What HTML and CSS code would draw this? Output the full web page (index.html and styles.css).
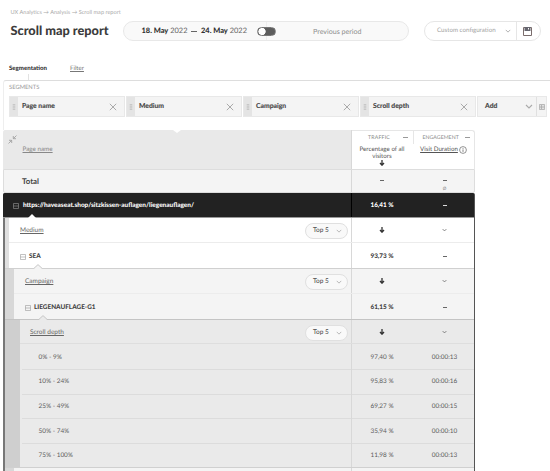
FILE: index.html
```html
<!DOCTYPE html>
<html lang="en">
<head>
<meta charset="utf-8">
<title>Scroll map report</title>
<link rel="stylesheet" href="styles.css">
</head>
<body>
<svg class="defs" width="0" height="0">
  <symbol id="chev" viewBox="0 0 8 5"><path d="M1 1l3 3 3-3" fill="none" stroke="currentColor" stroke-width="1.1"/></symbol>
  <symbol id="close" viewBox="0 0 8 8"><path d="M.8.8l6.4 6.4M7.2.8L.8 7.2" fill="none" stroke="currentColor"/></symbol>
  <symbol id="down" viewBox="0 0 6 6"><path d="M3 0v5M1 3l2 2.2L5 3" fill="none" stroke="currentColor" stroke-width="1.3"/></symbol>
  <symbol id="box" viewBox="0 0 6 6"><path d="M.5.5h5v5h-5zM.5 3h5" fill="none" stroke="currentColor" stroke-width=".6"/></symbol>
  <symbol id="grip" viewBox="0 0 4 7"><path d="M.5 1h3M.5 3.5h3M.5 6h3" fill="none" stroke="currentColor" stroke-width=".9"/></symbol>
  <symbol id="notch" viewBox="0 0 8 5"><path d="M0 4.5L4 .7l4 3.8V5H0z" fill="currentColor"/><path d="M0 4.3L4 .6l4 3.7" fill="none" stroke="#c6c6c6"/></symbol>
</svg>
<header>
  <div class="crumbs">UX Analytics → Analysis → Scroll map report</div>
  <div class="bar">
    <h1>Scroll map report</h1>
    <div class="period">
      <span class="date"><b>18. May</b> 2022</span><span class="dash"></span><span class="date"><b>24. May</b> 2022</span>
      <span class="split"><span class="toggle"></span></span>
      <span class="prev">Previous period</span>
    </div>
    <div class="config">
      <span class="cfg">Custom configuration</span>
      <svg class="cv" width="6" height="4"><use href="#chev"/></svg>
      <span class="save"><svg width="9" height="9" viewBox="0 0 9 9"><path d="M.5.5h8v8h-8z" fill="#fff" stroke="#7a6c6c"/><path d="M1.5 0h6v4h-6z" fill="#66666f"/><path d="M5 1h1v1.5H5z" fill="#fff"/></svg></span>
    </div>
  </div>
</header>
<nav><b>Segmentation</b><u>Filter</u></nav>
<section class="segments">
  <div class="label">SEGMENTS</div>
  <div class="chips">
    <div class="chip"><i><svg width="4" height="6"><use href="#grip"/></svg></i><span>Page name</span><svg class="x" width="8" height="8"><use href="#close"/></svg></div>
    <div class="chip"><i><svg width="4" height="6"><use href="#grip"/></svg></i><span>Medium</span><svg class="x" width="8" height="8"><use href="#close"/></svg></div>
    <div class="chip"><i><svg width="4" height="6"><use href="#grip"/></svg></i><span>Campaign</span><svg class="x" width="8" height="8"><use href="#close"/></svg></div>
    <div class="chip"><i><svg width="4" height="6"><use href="#grip"/></svg></i><span>Scroll depth</span><svg class="x" width="8" height="8"><use href="#close"/></svg></div>
    <div class="chip add"><span>Add</span><svg class="x" width="8" height="5"><use href="#chev"/></svg><em><svg width="6" height="6" viewBox="0 0 6 6"><path d="M.4.5h5.2v5H.4zM.5 2.2h5M.5 3.8h5M2.5 1v4" fill="none" stroke="#aaa" stroke-width=".8"/></svg></em></div>
  </div>
</section>
<main>
  <div class="row head">
    <div class="c1"><svg class="collapse" width="9" height="9" viewBox="0 0 9 9"><path d="M8.5.5L5.5 3.5M5.3 1v2.7H8M.5 8.5l3-3M1 5.3h2.7V8" fill="none" stroke="#999" stroke-width=".8"/></svg><u>Page name</u></div>
    <div class="c2"><div class="cap"><span>TRAFFIC</span><i></i></div><p>Percentage of all<br>visitors</p><svg width="6" height="6"><use href="#down"/></svg></div>
    <div class="c3"><div class="cap"><span>ENGAGEMENT</span><i></i></div><p><u>Visit Duration</u><svg width="8" height="8" viewBox="0 0 8 8"><circle cx="4" cy="4" r="3.4" fill="none" stroke="#666" stroke-width=".7"/><path d="M4 3.4v2.5M4 2v.8" stroke="#666" stroke-width=".8"/></svg></p></div>
  </div>
  <div class="row total"><div class="c1">Total</div><div class="c2"><s></s></div><div class="c3"><s></s><small>Ø</small></div></div>
  <div class="tree">
    <div class="row page"><div class="c1"><svg width="6" height="6"><use href="#box"/></svg><b>https://haveaseat.shop/sitzkissen-auflagen/liegenauflagen/</b></div><div class="c2"><b>16,41 %</b></div><div class="c3"><s></s></div></div>
    <div class="level l1">
      <div class="row dim"><div class="c1"><u>Medium</u><span class="top">Top 5<svg width="6" height="4"><use href="#chev"/></svg></span></div><div class="c2"><svg width="6" height="6"><use href="#down"/></svg></div><div class="c3"><svg width="5" height="4"><use href="#chev"/></svg></div></div>
      <div class="row item"><div class="c1"><svg width="6" height="6"><use href="#box"/></svg><b>SEA</b><svg class="notch" width="8" height="5"><use href="#notch"/></svg></div><div class="c2"><b>93,73 %</b></div><div class="c3"><s></s></div></div>
    </div>
    <div class="level l2">
      <div class="row dim"><div class="c1"><u>Campaign</u><span class="top">Top 5<svg width="6" height="4"><use href="#chev"/></svg></span></div><div class="c2"><svg width="6" height="6"><use href="#down"/></svg></div><div class="c3"><svg width="5" height="4"><use href="#chev"/></svg></div></div>
      <div class="row item"><div class="c1"><svg width="6" height="6"><use href="#box"/></svg><b>LIEGENAUFLAGE-G1</b><svg class="notch dark" width="8" height="5"><use href="#notch"/></svg></div><div class="c2"><b>61,15 %</b></div><div class="c3"><s></s></div></div>
    </div>
    <div class="level l3">
      <div class="row dim"><div class="c1"><u>Scroll depth</u><span class="top">Top 5<svg width="6" height="4"><use href="#chev"/></svg></span></div><div class="c2"><svg width="6" height="6"><use href="#down"/></svg></div><div class="c3"><svg width="5" height="4"><use href="#chev"/></svg></div></div>
      <div class="row leaf"><div class="c1">0% - 9%</div><div class="c2">97,40 %</div><div class="c3">00:00:13</div></div>
      <div class="row leaf"><div class="c1">10% - 24%</div><div class="c2">95,83 %</div><div class="c3">00:00:16</div></div>
      <div class="row leaf"><div class="c1">25% - 49%</div><div class="c2">69,27 %</div><div class="c3">00:00:15</div></div>
      <div class="row leaf"><div class="c1">50% - 74%</div><div class="c2">35,94 %</div><div class="c3">00:00:10</div></div>
      <div class="row leaf"><div class="c1">75% - 100%</div><div class="c2">11,98 %</div><div class="c3">00:00:13</div></div>
    </div>
    <div class="level l2 rest"><div class="row"><div class="c1"></div><div class="c2"></div><div class="c3"></div></div></div>
  </div>
</main>
</body>
</html>
```
FILE: styles.css
```css
* { box-sizing: border-box; }
html, body { height: 471px; overflow: hidden; }
body { margin: 0; width: 550px; background: #fff; color: #555; font: 6.4px/8px Lato, "Open Sans", sans-serif; text-rendering: geometricPrecision; }
.defs { position: absolute; }
svg { display: block; flex: none; }
i, em { font-style: normal; }
u { text-decoration-thickness: .6px; text-underline-offset: 1px; }

header { height: 62px; padding: 8px 9px 0 10.5px; }
.crumbs { height: 9px; line-height: 10px; font-size: 5.6px; color: #aaa; }
.bar { display: flex; align-items: center; height: 20px; margin-top: 4px; }
h1 { width: 112.5px; margin: 0; font-size: 12.75px; line-height: 18.5px; height: 20px; font-weight: 900; color: #3c3c3c; white-space: nowrap; }
.period { display: flex; align-items: center; width: 286px; height: 20px; padding-left: 17.5px; border: 1px solid #e8e8e8; border-radius: 10px; background: #f9f9f9; }
.date { width: 46px; font-size: 7.45px; white-space: nowrap; color: #666; }
.date b { color: #333; font-weight: 900; }
.dash { width: 6px; height: 1px; margin: 0 4px 0 3.5px; background: #666; }
.split { display: flex; align-items: center; height: 18px; width: 20px; margin-left: 9.5px; background: linear-gradient(90deg, transparent 9px, #eee 9px, #eee 10px, transparent 10px); }
.toggle { width: 19px; height: 9px; border: 1px solid #777; border-radius: 5px; background: radial-gradient(circle at 4px 50%, #fff 3.3px, #5d5d5d 4px); }
.prev { margin-left: 36.5px; padding-top: 1px; font-size: 7.1px; color: #8e8e8e; }
.config { display: flex; align-items: center; width: 117px; height: 20px; margin-left: 15px; padding-left: 12px; border: 1px solid #e6e6e6; border-radius: 10px; color: #a2a2a2; font-size: 6.2px; }
.cfg { width: 68px; white-space: nowrap; }
.save { display: flex; align-items: center; height: 18px; margin-left: 5px; padding-left: 6px; border-left: 1px solid #e6e6e6; }

nav { display: flex; height: 18px; padding: 2px 0 0 9px; line-height: 9px; font-size: 6.1px; background: linear-gradient(#e2e2e2, #e2e2e2) 28px 12px / 1px 6px no-repeat; }
nav b { width: 61px; color: #333; font-weight: 900; }
nav u { color: #777; }
.segments { height: 50px; margin-left: 3px; padding: 2px 0 0 5px; border-top: 1px solid #ddd; border-left: 1px solid #eee; border-radius: 3px 0 0 0; }
.label { height: 13px; line-height: 10px; font-size: 5.8px; color: #999; }
.chips { display: flex; gap: 1px; }
.chip { display: flex; align-items: center; width: 116px; height: 21px; border: 1px solid #e8e8e8; background: #f4f4f4; color: #444; font-weight: 700; font-size: 6.8px; -webkit-text-stroke: .12px; }
.chip span { margin-top: -1px; }
.chip i { display: flex; align-items: center; justify-content: center; width: 8px; height: 19px; margin-right: 4px; background: #e4e4e4; color: #aaa; }
.chip .x { margin: 0 7px 0 auto; color: #aaa; }
.chip.add { width: 70px; padding-left: 7px; }
.chip.add .x { margin-right: 3px; }
.chip em { display: flex; align-items: center; width: 10px; height: 19px; padding-left: 2px; border-left: 1px solid #e0e0e0; }

main { width: 472px; margin-left: 3px; }
.row { display: flex; }
.row > div { display: flex; align-items: center; }
.c1 { flex: 1; min-width: 0; border-right: 1px solid #d8d8d8; }
.c2, .c3 { position: relative; justify-content: center; flex: none; }
.row > .c2 { width: 61px; padding-right: 1px; }
.row > .c3 { width: 61px; padding-left: 2px; }
b { font-weight: 900; color: #444; }
s { width: 4px; height: 1px; background: #666; }
.head { height: 38.5px; border: 1px solid #e6e6e6; border-left: 0; border-radius: 3px 3px 0 0; border-bottom: 0; }
.row.head > div { display: block; }
.row.head > .c1 { margin-top: -1px; padding: 5px 0 0 5px; border-radius: 3px 0 0 0; background: #e9e9e9; position: relative; }
.head .c1::after { content: ""; position: absolute; left: 170px; top: 0; border: 4px solid transparent; border-top: 3.5px solid #fff; border-bottom: 0; }
.head u { color: #888; }
.head .c1 u { display: block; margin: 2px 0 0 14.5px; font-size: 6.3px; }
.cap { display: flex; align-items: center; justify-content: space-between; height: 13px; padding: 0 4px 0 16px; font-size: 5.2px; letter-spacing: .2px; color: #888; }
.cap i { width: 5px; height: 1px; background: #999; }
.row.head > .c3 { padding-left: 0; }
.head .c3 .cap { padding: 0 4px 0 8.5px; border-left: 1px solid #e6e6e6; letter-spacing: .05px; }
.head p { margin: 1.5px 0 0; text-align: center; line-height: 7px; font-size: 6.2px; white-space: nowrap; color: #555; }
.head .c2 > svg { margin: 0 auto; color: #333; }
.head .c3 p { display: flex; align-items: center; justify-content: center; gap: 1px; }
.head .c3 u { color: #555; }
.total { height: 24.5px; border: 1px solid #ddd; border-radius: 0 0 2px 2px; background: #f4f4f4; }
.total .c1 { padding-left: 18px; font-size: 7.8px; font-weight: 700; color: #444; }
.total small { position: absolute; top: 15px; font-size: 4.5px; color: #888; }

.tree { border-left: 2px solid #777; border-right: 1px solid #555; background: #222; border-radius: 2px 2px 0 0; }
.page { height: 25px; background: #222; margin-left: -2px; border-radius: 2px 2px 0 0; border-bottom: 1px solid #999; }
.row.page > div { padding-top: 1px; }
.page .c1 { padding-left: 10px; gap: 4px; position: relative; border-color: #000; color: #999; }
.page b { color: #fff; }
.page .c1 b { font-size: 6.45px; white-space: nowrap; }
.page s { background: #ddd; }
.page .c1::after { content: ""; position: absolute; left: 25px; bottom: -1px; border: 4px solid transparent; border-bottom-color: #fff; border-top: 0; }
.level { padding-left: 4px; background: linear-gradient(90deg, #e0e0e0 4px, #fff 4px); }
.l2 { padding-left: 9px; background: linear-gradient(90deg, #d8d8d8 9px, #f4f4f4 9px); border-top: 1px solid #d0d0d0; }
.l3 { padding-left: 15px; background: linear-gradient(90deg, #cfcfcf 15px, #eaeaea 15px); border-top: 1px solid #c4c4c4; }
.dim { height: 25.3px; border-bottom: 1px solid #ececec; }
.item { height: 24.7px; }
.l3 .dim { height: 24.5px; border-color: #dedede; }
.row.dim > .c1 { padding: 2px 3px 0 11px; justify-content: space-between; font-size: 6.5px; color: #666; }
.l3 .row.dim > .c1 { padding-left: 10px; }
.top { display: flex; align-items: center; width: 43px; height: 16px; padding: 0 5px 0 7px; justify-content: space-between; border: 1px solid #e0e0e0; border-radius: 8px; background: #f9f9f9; font-size: 6.5px; color: #444; }
.top svg { color: #aaa; }
.dim .c2 svg { color: #333; }
.row.item > div { padding-top: 2px; }
.item .c1 { position: relative; padding-left: 10.5px; gap: 3.5px; color: #999; }
.notch { position: absolute; left: 24.5px; bottom: -1px; color: #f4f4f4; }
.notch.dark { color: #eaeaea; }
.leaf { height: 24.6px; color: #5c5c5c; }
.row.leaf > div { padding-top: 2px; }
.leaf .c1 { padding-left: 18.5px; }
.leaf + .leaf { background: linear-gradient(#dcdcdc, #dcdcdc) 2px 0 / 100% 1px no-repeat; }
.rest { height: 5px; }
.rest .row { height: 4px; }
```
